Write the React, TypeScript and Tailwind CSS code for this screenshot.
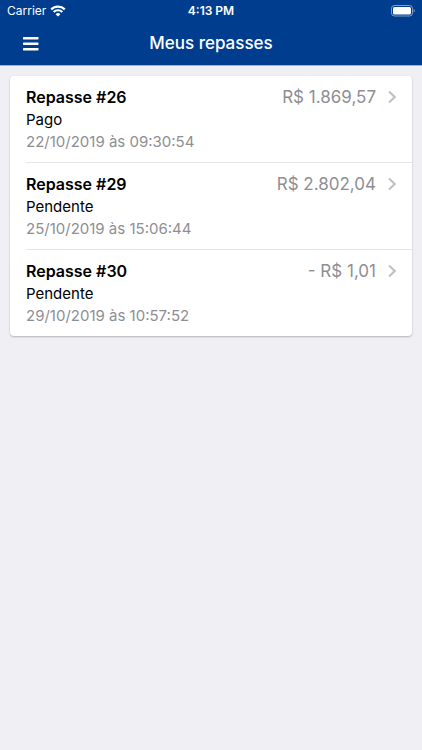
import { clsx } from 'clsx'

interface Transfer {
    id: number;
    status: string;
    date: string;
    amount: string;
}

const transfers: Transfer[] = [
    { id: 26, status: 'Pago', date: '22/10/2019 às 09:30:54', amount: 'R$ 1.869,57' },
    { id: 29, status: 'Pendente', date: '25/10/2019 às 15:06:44', amount: 'R$ 2.802,04' },
    { id: 30, status: 'Pendente', date: '29/10/2019 às 10:57:52', amount: '- R$ 1,01' },
]

function WifiIcon() {
    return (
        <svg viewBox="0 0 16 12" className="w-4 h-3" fill="none" stroke="currentColor" strokeWidth="2.2" aria-hidden="true">
            <path d="M1.2 4.4a9.700 9.700 0 0 1 13.600 0" />
            <path d="M3.700 7a6.100 6.100 0 0 1 8.600 0" />
            <path d="M8 11.600 5.600 9.200a3.400 3.400 0 0 1 4.800 0z" fill="currentColor" stroke="none" />
        </svg>
    )
}

function BatteryIcon() {
    return (
        <svg viewBox="0 0 24 12" className="w-6 h-3" aria-hidden="true">
            <rect x="0.5" y="0.5" width="21" height="10.5" rx="3" fill="none" stroke="#fff" strokeOpacity="0.5" />
            <rect x="2" y="2" width="18" height="7.5" rx="1.5" fill="#fff" />
            <path d="M22.6 4v3.6c.7-.3 1.200-1 1.200-1.800s-.5-1.500-1.200-1.800z" fill="#fff" fillOpacity="0.5" />
        </svg>
    )
}

function StatusBar() {
    return (
        <div className="grid grid-cols-3 items-center h-[22px] px-[7px] text-xs">
            <div className="flex items-center gap-1">
                <span>Carrier</span>
                <WifiIcon />
            </div>
            <span className="text-center font-semibold">4:13 PM</span>
            <div className="flex justify-end">
                <BatteryIcon />
            </div>
        </div>
    )
}

function NavBar() {
    return (
        <div className="grid grid-cols-[40px_1fr_40px] items-center h-[43px] px-[11px]">
            <button type="button" aria-label="Menu" className="flex items-center justify-center h-10">
                <svg viewBox="0 0 16 14" className="w-4 h-3.5" fill="currentColor" aria-hidden="true">
                    <rect y="0" width="15.5" height="2.4" rx="0.4" />
                    <rect y="5.5" width="15.5" height="2.4" rx="0.4" />
                    <rect y="11" width="15.5" height="2.4" rx="0.4" />
                </svg>
            </button>
            <h1 className="text-center text-[17px] font-medium">Meus repasses</h1>
        </div>
    )
}

function TransferRow({ transfer, last }: { transfer: Transfer; last: boolean }) {
    return (
        <li className="pl-4">
            <a
                href={`#repasse-${transfer.id}`}
                className={clsx('flex items-start justify-between py-2.5 pr-4', !last && 'border-b border-[#e6e6e8]')}
            >
                <div>
                    <h2 className="text-base leading-[22px] font-semibold">Repasse #{transfer.id}</h2>
                    <p className="text-[15px] leading-6">{transfer.status}</p>
                    <p className="text-[15px] leading-5 text-[#8e8e93]">{transfer.date}</p>
                </div>
                <div className="flex items-center gap-3">
                    <span className="text-[17px] leading-[22px] text-[#8e8e93]">{transfer.amount}</span>
                    <svg viewBox="0 0 8 14" className="w-2 h-3.5 text-[#c0c0c4]" fill="none" stroke="currentColor" strokeWidth="2" aria-hidden="true">
                        <path d="M1 1.5 6.7 7 1 12.5" />
                    </svg>
                </div>
            </a>
        </li>
    )
}

export default function App() {
    return (
        <div className="min-h-screen bg-[#efeff4] text-black font-[Inter,sans-serif]">
            <header className="bg-[#003d8f] text-white border-b border-[#8fb4e6]">
                <StatusBar />
                <NavBar />
            </header>
            <main className="p-2.5">
                <ul className="bg-white rounded-[4px] shadow-[0_1px_2px_rgba(0,0,0,0.25)]">
                    {transfers.map((transfer, i) => (
                        <TransferRow key={transfer.id} transfer={transfer} last={i === transfers.length - 1} />
                    ))}
                </ul>
            </main>
        </div>
    )
}
